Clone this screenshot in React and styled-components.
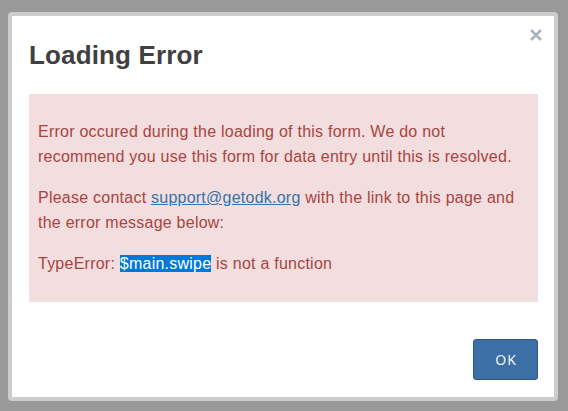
import styled, { createGlobalStyle } from "styled-components";

const GlobalStyle = createGlobalStyle`
  html, body {
    margin: 0;
    padding: 0;
    background: #999999;
    font-family: "Liberation Sans", Arial, sans-serif;
  }
`

const Page = styled.div`
  width: 568px;
  height: 411px;
  box-sizing: border-box;
  padding: 12px 10px 10px 8px;
`

const Dialog = styled.div`
  width: 550px;
  height: 389px;
  box-sizing: border-box;
  border: 4px solid #cccccc;
  border-radius: 4px;
  background: #fff;
  display: flex;
  flex-direction: column;
`

const Header = styled.div`
  display: flex;
  justify-content: space-between;
  align-items: flex-start;
  padding: 13px 12px 24px 17px;

  h3 {
    margin: 11px 0 0;
    font-size: 26px;
    line-height: 30px;
    font-weight: 700;
    letter-spacing: 0.15px;
    color: #404040;
  }
`

const Close = styled.button`
  border: 0;
  padding: 0;
  background: none;
  width: 12px;
  height: 12px;
  display: block;
  cursor: pointer;
  svg {
    display: block;
  }
`

const Alert = styled.div`
  margin: 0 16px 0 17px;
  padding: 25px 15px 26px 9px;
  background: #f2dede;
  color: #a94442;
  font-size: 16px;
  line-height: 25px;
  letter-spacing: 0.24px;

  p {
    margin: 0 0 16px;
  }
  p:last-child {
    margin-bottom: 0;
  }
  a {
    color: #3672ac;
    text-decoration: underline;
  }
`

const Selected = styled.span`
  background: #0078d7;
  color: #fff;
`

const Footer = styled.div`
  display: flex;
  justify-content: flex-end;
  padding: 37px 16px 16px;
`

const Button = styled.button`
  width: 65px;
  height: 41px;
  box-sizing: border-box;
  border: 1px solid #2d5987;
  border-radius: 3px;
  background: #3c6fa5;
  color: #fff;
  font-family: "Open Sans", sans-serif;
  font-size: 14px;
  letter-spacing: 1px;
  padding: 0 0 0 1px;
  cursor: pointer;
`

export default function App() {
  return (
    <Page>
      <GlobalStyle />
      <Dialog>
        <Header>
          <h3>Loading Error</h3>
          <Close aria-label="close">
            <svg width="12" height="12" viewBox="0 0 12 12">
              <path d="M1 1 L11 11 M11 1 L1 11" stroke="#aab3bf" strokeWidth="2.6" strokeLinecap="butt" />
            </svg>
          </Close>
        </Header>
        <Alert>
          <p>Error occured during the loading of this form. We do not recommend you use this form for data entry until this is resolved.</p>
          <p>Please contact <a href="#">support@getodk.org</a> with the link to this page and the error message below:</p>
          <p>TypeError: <Selected>$main.swipe</Selected> is not a function</p>
        </Alert>
        <Footer>
          <Button>OK</Button>
        </Footer>
      </Dialog>
    </Page>
  )
}
